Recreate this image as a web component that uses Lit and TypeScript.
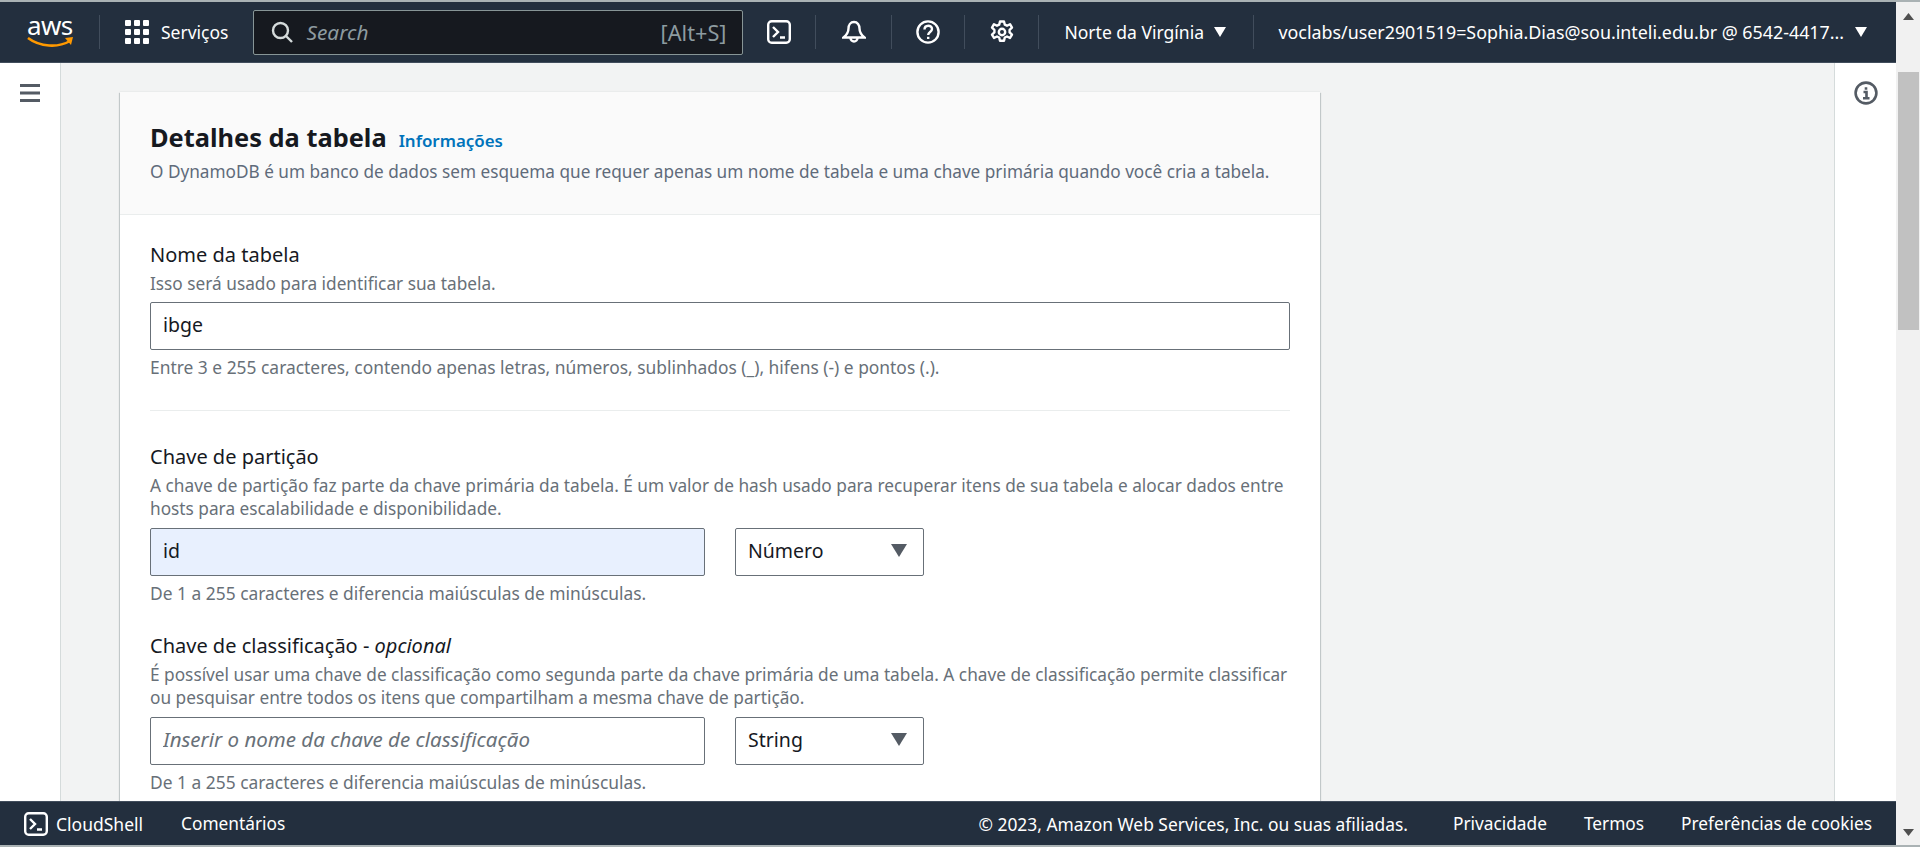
import { LitElement, html, css } from 'lit';
import { customElement } from 'lit/decorators.js';

const caret = html`<svg class="caret" viewBox="0 0 12 10"><path d="M0 0h12L6 10z"/></svg>`;

const shellIcon = html`<svg class="icon" viewBox="0 0 24 24" fill="none" stroke="#fff" stroke-width="2.4">
  <rect x="1.2" y="1.2" width="21.6" height="21.6" rx="3.5"/>
  <path d="M6 7l5 5-5 5M13 17.500h5"/>
</svg>`;

@customElement('app-root')
export class AppRoot extends LitElement {
  static styles = css`
    :host {
      display: block;
      font-family: 'Noto Sans', 'Open Sans', sans-serif;
      color: #16191f;
    }

    .app {
      display: flex;
      box-sizing: border-box;
      height: 847px;
      overflow: hidden;
      border-top: 2px solid #aab2b4;
      border-bottom: 2px solid #aab2b4;
    }

    .page {
      flex: 1;
      min-width: 0;
      display: flex;
      flex-direction: column;
    }

    .topnav {
      display: flex;
      align-items: center;
      box-sizing: border-box;
      height: 61px;
      flex: none;
      background: #232f3e;
      border-bottom: 1px solid #414d5c;
      color: #fff;
      font-size: 17.5px;
    }

    .logo {
      box-sizing: border-box;
      width: 100px;
      height: 34px;
      padding-left: 27px;
      border-right: 1px solid #414d5c;
      display: flex;
      flex-direction: column;
    }

    .logo span {
      font-size: 26px;
      line-height: 20px;
      letter-spacing: -0.6px;
    }

    .logo svg {
      width: 47px;
      height: 12px;
      margin-top: 1px;
    }

    .services {
      display: flex;
      align-items: center;
      gap: 12px;
      margin-left: 25px;
    }

    .icon {
      width: 24px;
      height: 24px;
      flex: none;
    }

    .search {
      display: flex;
      align-items: center;
      box-sizing: border-box;
      width: 490px;
      height: 45px;
      margin-left: 25px;
      padding: 0 16px 0 17px;
      background: #16191f;
      border: 1px solid #879596;
      border-radius: 2px;
      color: #8d9ba0;
      font-size: 20.8px;
    }

    .search svg {
      width: 22px;
      height: 22px;
      margin-right: 13px;
    }

    .search em {
      flex: 1;
    }

    .search span {
      font-size: 21.7px;
    }

    .nav-cell {
      display: flex;
      justify-content: center;
      align-items: center;
      box-sizing: border-box;
      height: 34px;
      border-right: 1px solid #414d5c;
    }

    .region {
      display: flex;
      align-items: center;
      gap: 10px;
      box-sizing: border-box;
      width: 215px;
      height: 34px;
      padding-left: 25px;
      border-right: 1px solid #414d5c;
    }

    .account {
      display: flex;
      align-items: center;
      gap: 11px;
      padding-left: 24px;
      white-space: nowrap;
      font-size: 17.85px;
    }

    .caret {
      width: 12px;
      height: 10px;
      fill: #fff;
    }

    .body {
      flex: 1;
      min-height: 0;
      display: flex;
      overflow: hidden;
    }

    .rail {
      box-sizing: border-box;
      flex: none;
      width: 61px;
      background: #fff;
      display: flex;
      justify-content: center;
      padding-top: 18px;
    }

    .rail.left {
      border-right: 1px solid #d5dbdb;
    }

    .rail.right {
      width: 62px;
      border-left: 1px solid #d5dbdb;
    }

    .rail svg {
      width: 24px;
      height: 24px;
    }

    .content {
      flex: 1;
      min-width: 0;
      background: #f2f3f3;
      padding: 29px 0 0 59px;
    }

    .card {
      width: 1200px;
      background: #fff;
      box-shadow: 0 1px 1px 0 rgba(0, 28, 36, 0.3), 1px 1px 1px 0 rgba(0, 28, 36, 0.15), -1px 1px 1px 0 rgba(0, 28, 36, 0.15), 0 -1px 1px 0 rgba(0, 28, 36, 0.03);
    }

    .card-header {
      background: #fafafa;
      border-bottom: 1px solid #eaeded;
      padding: 29px 30px 30px;
    }

    .title-row {
      display: flex;
      align-items: baseline;
      gap: 12px;
      line-height: 32px;
    }

    h2 {
      margin: 0;
      font-size: 25.4px;
      font-weight: 700;
    }

    a {
      color: #0073bb;
      font-size: 16.9px;
      font-weight: 600;
      text-decoration: none;
    }

    .card-header p {
      margin: 3px 0 0;
      font-size: 17.2px;
      line-height: 24px;
      color: #5f6b7a;
    }

    .card-body {
      padding: 28px 30px 40px;
    }

    .label {
      font-size: 20px;
      line-height: 24px;
    }

    .desc {
      margin-top: 5px;
      font-size: 17.25px;
      line-height: 23.5px;
      color: #687078;
    }

    .hint {
      margin-top: 5px;
      font-size: 17.4px;
      line-height: 24px;
      color: #687078;
    }

    .input {
      display: block;
      box-sizing: border-box;
      width: 100%;
      height: 48px;
      padding: 0 12px 2px;
      margin: 0;
      border: 1px solid #687078;
      border-radius: 2px;
      background: #fff;
      color: #16191f;
      font: inherit;
      font-size: 19.5px;
      outline: none;
    }

    .input::placeholder {
      color: #687078;
      font-style: italic;
      font-size: 20.5px;
      opacity: 1;
    }

    .input.filled {
      background: #e8f0fe;
    }

    .field-row {
      display: flex;
      gap: 30px;
      margin-top: 7px;
    }

    .field-row .input {
      width: 555px;
    }

    .full {
      margin-top: 6px;
    }

    .select {
      display: flex;
      align-items: center;
      justify-content: space-between;
      box-sizing: border-box;
      width: 189px;
      height: 48px;
      padding: 0 16px 2px 12px;
      border: 1px solid #687078;
      border-radius: 2px;
      background: #fff;
      font-size: 19.5px;
    }

    .select svg {
      width: 16px;
      height: 13px;
      fill: #545b64;
    }

    hr {
      border: none;
      border-top: 1px solid #eaeded;
      margin: 31px 0 34px;
    }

    .next {
      margin-top: 29px;
    }

    .footer {
      display: flex;
      align-items: center;
      box-sizing: border-box;
      height: 44px;
      flex: none;
      background: #232f3e;
      border-top: 1px solid #414d5c;
      color: #fff;
      font-size: 17.3px;
      padding: 0 24px;
    }

    .footer .shell {
      display: flex;
      align-items: center;
      gap: 8px;
    }

    .footer .shell span {
      font-size: 17.5px;
    }

    .footer .feedback {
      margin-left: 38px;
    }

    .footer .legal {
      margin-left: auto;
      display: flex;
      gap: 37px;
    }

    .footer .copyright {
      margin-right: 8px;
      font-size: 17.4px;
    }

    .scrollbar {
      flex: none;
      width: 24px;
      background: #f1f1f1;
      display: flex;
      flex-direction: column;
      align-items: center;
    }

    .scrollbar .up,
    .scrollbar .down {
      width: 11px;
      height: 7px;
      fill: #505050;
    }

    .scrollbar .up {
      margin-top: 11px;
    }

    .scrollbar .thumb {
      width: 21px;
      height: 258px;
      margin-top: 52px;
      background: #c1c1c1;
    }

    .scrollbar .down {
      margin-top: auto;
      margin-bottom: 9px;
    }
  `;

  render() {
    return html`
      <div class="app">
        <div class="page">
          <header class="topnav">
            <div class="logo">
              <span>aws</span>
              <svg viewBox="0 0 47 12" fill="none">
                <path d="M1 2c12 9 30 10 42 3" stroke="#f90" stroke-width="2.6"/>
                <path d="M38 2l8-1-2 8z" fill="#f90"/>
              </svg>
            </div>
            <div class="services">
              <svg class="icon" viewBox="0 0 24 24" fill="#fff">
                <rect x="0" y="0" width="6" height="6" rx="1"/><rect x="9" y="0" width="6" height="6" rx="1"/><rect x="18" y="0" width="6" height="6" rx="1"/>
                <rect x="0" y="9" width="6" height="6" rx="1"/><rect x="9" y="9" width="6" height="6" rx="1"/><rect x="18" y="9" width="6" height="6" rx="1"/>
                <rect x="0" y="18" width="6" height="6" rx="1"/><rect x="9" y="18" width="6" height="6" rx="1"/><rect x="18" y="18" width="6" height="6" rx="1"/>
              </svg>
              <span>Serviços</span>
            </div>
            <div class="search">
              <svg viewBox="0 0 22 22" fill="none" stroke="#d5dbdb" stroke-width="2.4">
                <circle cx="9.500" cy="9.500" r="7.500"/><path d="M15 15l6 6"/>
              </svg>
              <em>Search</em>
              <span>[Alt+S]</span>
            </div>
            <div class="nav-cell" style="width:73px">${shellIcon}</div>
            <div class="nav-cell" style="width:76px">
              <svg class="icon" viewBox="0 0 24 24" fill="none" stroke="#fff" stroke-width="2.4">
                <path d="M12 2C8.500 2 6.500 5 6.500 8.500c0 4-2 6.500-5 9h21c-3-2.500-5-5-5-9C17.500 5 15.500 2 12 2z"/>
                <path d="M8.500 18a3.500 3.500 0 0 0 7 0"/>
              </svg>
            </div>
            <div class="nav-cell" style="width:73px">
              <svg class="icon" viewBox="0 0 24 24" fill="none" stroke="#fff" stroke-width="2.4">
                <circle cx="12" cy="12" r="10.600"/>
                <path d="M8.500 9.500c0-5 7.500-5 7.500-.5 0 3-3.800 3-3.800 6"/>
                <path d="M12.200 16.800v2.200"/>
              </svg>
            </div>
            <div class="nav-cell" style="width:74px">
              <svg class="icon" viewBox="0 0 24 24" fill="none" stroke="#fff" stroke-width="2.400">
                <path d="M10 1.500h4l.8 3.200 2.200 1 3-1.500 2 3.400-2.400 2.200v2.600l2.400 2.200-2 3.400-3-1.500-2.200 1-.8 3.200h-4l-.8-3.200-2.200-1-3 1.500-2-3.400 2.400-2.200v-2.600L2 7.600l2-3.400 3 1.500 2.200-1z" stroke-linejoin="round"/>
                <circle cx="12" cy="12" r="3.200"/>
              </svg>
            </div>
            <div class="region"><span>Norte da Virgínia</span>${caret}</div>
            <div class="account"><span>voclabs/user2901519=Sophia.Dias@sou.inteli.edu.br @ 6542-4417...</span>${caret}</div>
          </header>

          <div class="body">
            <aside class="rail left">
              <svg viewBox="0 0 24 24" fill="none" stroke="#545b64" stroke-width="3">
                <path d="M2 4.500h20M2 12h20M2 19.500h20"/>
              </svg>
            </aside>
            <main class="content">
              <section class="card">
                <div class="card-header">
                  <div class="title-row">
                    <h2>Detalhes da tabela</h2>
                    <a href="#">Informações</a>
                  </div>
                  <p>O DynamoDB é um banco de dados sem esquema que requer apenas um nome de tabela e uma chave primária quando você cria a tabela.</p>
                </div>
                <div class="card-body">
                  <div class="label">Nome da tabela</div>
                  <div class="desc">Isso será usado para identificar sua tabela.</div>
                  <input class="input full" .value=${'ibge'} />
                  <div class="hint">Entre 3 e 255 caracteres, contendo apenas letras, números, sublinhados (_), hifens (-) e pontos (.).</div>
                  <hr />
                  <div class="label">Chave de partição</div>
                  <div class="desc">A chave de partição faz parte da chave primária da tabela. É um valor de hash usado para recuperar itens de sua tabela e alocar dados entre hosts para escalabilidade e disponibilidade.</div>
                  <div class="field-row">
                    <input class="input filled" .value=${'id'} />
                    <div class="select"><span>Número</span><svg viewBox="0 0 16 13"><path d="M0 0h16L8 13z"/></svg></div>
                  </div>
                  <div class="hint">De 1 a 255 caracteres e diferencia maiúsculas de minúsculas.</div>
                  <div class="label next">Chave de classificação - <em>opcional</em></div>
                  <div class="desc">É possível usar uma chave de classificação como segunda parte da chave primária de uma tabela. A chave de classificação permite classificar ou pesquisar entre todos os itens que compartilham a mesma chave de partição.</div>
                  <div class="field-row">
                    <input class="input" placeholder="Inserir o nome da chave de classificação" />
                    <div class="select"><span>String</span><svg viewBox="0 0 16 13"><path d="M0 0h16L8 13z"/></svg></div>
                  </div>
                  <div class="hint">De 1 a 255 caracteres e diferencia maiúsculas de minúsculas.</div>
                </div>
              </section>
            </main>
            <aside class="rail right">
              <svg viewBox="0 0 24 24" fill="none" stroke="#545b64" stroke-width="2.6">
                <circle cx="12" cy="12" r="10.400"/>
                <path d="M9.500 11h3v6M9 17.300h6.500M12 6.300v2.400"/>
              </svg>
            </aside>
          </div>

          <footer class="footer">
            <div class="shell">${shellIcon}<span>CloudShell</span></div>
            <span class="feedback">Comentários</span>
            <div class="legal">
              <span class="copyright">© 2023, Amazon Web Services, Inc. ou suas afiliadas.</span>
              <span>Privacidade</span>
              <span>Termos</span>
              <span>Preferências de cookies</span>
            </div>
          </footer>
        </div>
        <div class="scrollbar">
          <svg class="up" viewBox="0 0 11 7"><path d="M0 7L5.500 0 11 7z"/></svg>
          <div class="thumb"></div>
          <svg class="down" viewBox="0 0 11 7"><path d="M0 0h11L5.500 7z"/></svg>
        </div>
      </div>
    `;
  }
}
